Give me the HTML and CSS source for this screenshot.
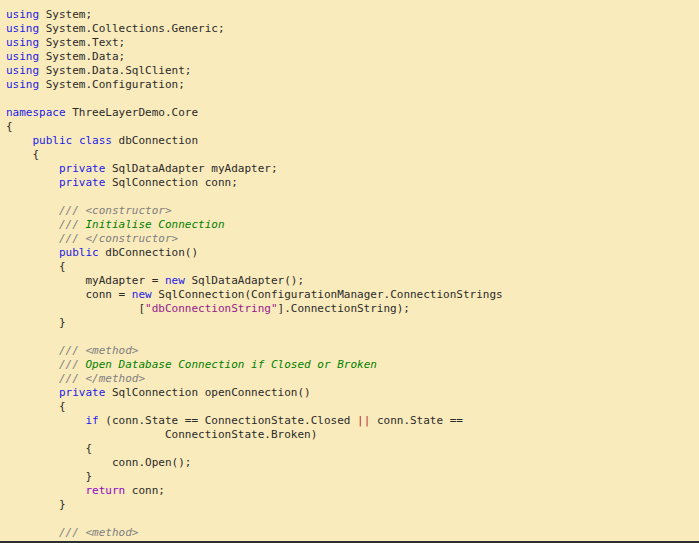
FILE: index.html
```html
<!DOCTYPE html>
<html>
<head>
<meta charset="utf-8">
<link rel="stylesheet" href="styles.css">
</head>
<body>
<div class="panel">
<pre class="code"><span class="kw">using</span> System;
<span class="kw">using</span> System.Collections.Generic;
<span class="kw">using</span> System.Text;
<span class="kw">using</span> System.Data;
<span class="kw">using</span> System.Data.SqlClient;
<span class="kw">using</span> System.Configuration;

<span class="kw">namespace</span> ThreeLayerDemo.Core
{
    <span class="kw">public</span> <span class="kw">class</span> dbConnection
    {
        <span class="kw">private</span> SqlDataAdapter myAdapter;
        <span class="kw">private</span> SqlConnection conn;

        <span class="cm">/// &lt;constructor&gt;</span>
        <span class="cm">/// <span class="ct">Initialise Connection</span></span>
        <span class="cm">/// &lt;/constructor&gt;</span>
        <span class="kw">public</span> dbConnection()
        {
            myAdapter = <span class="kw">new</span> SqlDataAdapter();
            conn = <span class="kw">new</span> SqlConnection(ConfigurationManager.ConnectionStrings
                    [<span class="str">"dbConnectionString"</span>].ConnectionString);
        }

        <span class="cm">/// &lt;method&gt;</span>
        <span class="cm">/// <span class="ct">Open Database Connection if Closed or Broken</span></span>
        <span class="cm">/// &lt;/method&gt;</span>
        <span class="kw">private</span> SqlConnection openConnection()
        {
            <span class="kw">if</span> (conn.State == ConnectionState.Closed <span class="op">||</span> conn.State ==
                        ConnectionState.Broken)
            {
                conn.Open();
            }
            <span class="ctl">return</span> conn;
        }

        <span class="cm">/// &lt;method&gt;</span></pre>
</div>
</body>
</html>
```
FILE: styles.css
```css
html, body {
  margin: 0;
  padding: 0;
  height: 100%;
}
body {
  display: flex;
  flex-direction: column;
  background: #2b2e33;
}
.panel {
  height: 541px;
  background: #faebbc;
  overflow: hidden;
}
.code {
  margin: 0;
  padding: 8px 0 0 6px;
  font-family: "DejaVu Sans Mono", "Liberation Mono", monospace;
  font-size: 11px;
  line-height: 14px;
  color: #2a2a2a;
  white-space: pre;
}
.kw { color: #1c1ce6; }
.ctl { color: #8f08c4; }
.cm { color: #808080; font-style: italic; }
.ct { color: #008000; }
.str { color: #9a1a8c; }
.op { color: #b02a2a; }
```
